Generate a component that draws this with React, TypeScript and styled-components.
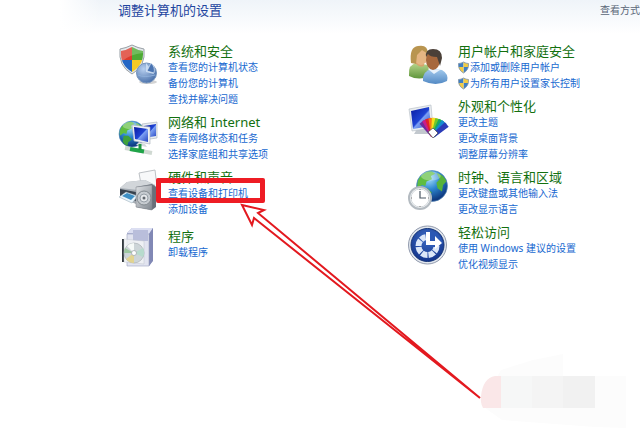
import React from 'react';
import styled, { createGlobalStyle } from 'styled-components';

const Global = createGlobalStyle`
  *, *::before, *::after { box-sizing: border-box; }
  body { margin: 0; background: #fff; font-family: "Noto Sans", "Noto Sans CJK SC", sans-serif; overflow: hidden; }
`;

const Page = styled.div`
  position: relative;
  min-height: 100vh;
  overflow: hidden;
  background: linear-gradient(90deg, #fff 60px, rgba(255, 255, 255, 0) 100px) no-repeat,
    linear-gradient(#eff4f9, #fff 34px);
`;

const Header = styled.header`
  display: flex;
  justify-content: space-between;
  align-items: center;
  height: 20px;
  padding-left: 118px;
`;

const Title = styled.h1`
  margin: 0;
  font-size: 13px;
  line-height: 20px;
  font-weight: 400;
  color: #1f45a0;
`;

const ViewBy = styled.span`
  font-size: 10px;
  line-height: 16px;
  color: #5a6678;
  white-space: nowrap;
`;

const Columns = styled.main`
  display: grid;
  grid-template-columns: 5fr 4fr;
  padding: 23px 0 0 118px;
`;

const Column = styled.div`
  display: flex;
  flex-direction: column;
  gap: 7px;
`;

const Group = styled.section<{ $spaced?: boolean }>`
  display: flex;
  gap: 10px;
  padding-top: ${(p) => (p.$spaced ? '4px' : '0')};
`;

const Icon = styled.svg`
  flex: none;
  width: 40px;
  height: 42px;
  overflow: visible;
`;

const Heading = styled.h2`
  margin: 0;
  font-size: 13px;
  line-height: 16px;
  font-weight: 400;
  color: #13700f;
  white-space: nowrap;
`;

const Links = styled.ul`
  margin: 0;
  padding: 0;
  list-style: none;
`;

const Item = styled.li`
  display: flex;
  align-items: center;
  gap: 1px;
  height: 16px;
`;

const Link = styled.a`
  font-size: 10px;
  line-height: 16px;
  color: #1768d0;
  text-decoration: none;
  white-space: nowrap;
  &:hover { text-decoration: underline; }
`;

const SmallShield = styled.svg`
  width: 11px;
  height: 13px;
`;

const Marker = styled.div`
  position: absolute;
  left: 156px;
  top: 178px;
  width: 109px;
  height: 25px;
  border: 5px solid #ee1c24;
  border-radius: 2px;
`;

const Overlay = styled.svg`
  position: absolute;
  left: 0;
  top: 0;
  width: 640px;
  height: 429px;
  pointer-events: none;
`;

const Defs = () => (
  <defs>
    <radialGradient id="globe" cx="40%" cy="25%" r="80%">
      <stop offset="0" stopColor="#a9e2fb" /><stop offset=".45" stopColor="#2c86d0" /><stop offset="1" stopColor="#08296f" />
    </radialGradient>
    <linearGradient id="screen" x2="1" y2="1">
      <stop offset="0" stopColor="#0a1aa0" /><stop offset=".5" stopColor="#2044d4" /><stop offset=".55" stopColor="#7ca0f4" /><stop offset="1" stopColor="#2746c0" />
    </linearGradient>
    <linearGradient id="metal" x2="1" y2="1">
      <stop offset="0" stopColor="#dfe2e5" /><stop offset="1" stopColor="#7f868e" />
    </linearGradient>
    <radialGradient id="pie" cx="35%" cy="30%" r="75%">
      <stop offset="0" stopColor="#b8d0f0" /><stop offset="1" stopColor="#486fa9" />
    </radialGradient>
    <linearGradient id="green" x2="0" y2="1">
      <stop offset="0" stopColor="#b9d68d" /><stop offset="1" stopColor="#5f963c" />
    </linearGradient>
    <linearGradient id="blue" x2="0" y2="1">
      <stop offset="0" stopColor="#a4cbed" /><stop offset="1" stopColor="#5289c4" />
    </linearGradient>
    <radialGradient id="ease" cx="50%" cy="30%" r="70%">
      <stop offset="0" stopColor="#3f6cc4" /><stop offset="1" stopColor="#12348c" />
    </radialGradient>
    <clipPath id="shieldClip"><path d="M14 4Q19 7 25 8Q26 22 14 29Q2 22 3 8Q9 7 14 4Z" /></clipPath>
    <clipPath id="miniClip"><path d="M5.500 1Q8 2.500 10.500 2.500Q11 9 5.500 12Q0 9 .500 2.500Q3 2.500 5.500 1Z" /></clipPath>
  </defs>
);

const Security = () => (
  <Icon viewBox="0 0 40 42" aria-hidden="true">
    <Defs />
    <path d="M14 2Q20 5 26 6Q28 23 14 31Q0 23 2 6Q8 5 14 2Z" fill="#e4e8eb" stroke="#99a0a6" />
    <g clipPath="url(#shieldClip)">
      <path d="M0 0H14V17H0Z" fill="#dd3b2c" /><path d="M14 0H28V17H14Z" fill="#4eaa35" />
      <path d="M0 17H14V32H0Z" fill="#2466c4" /><path d="M14 17H28V32H14Z" fill="#f5ca24" />
      <path d="M2 5Q14 2 26 5L25 10Q12 11 3 19Z" fill="#fff" opacity=".2" />
    </g>
    <ellipse cx="30" cy="39" rx="9" ry="2" fill="#aaa" opacity=".5" />
    <circle cx="28.500" cy="30" r="10" fill="url(#pie)" stroke="#7795bd" />
    <path d="M28 29V20L36 31Z" fill="#c9dcf3" /><path d="M29 28L33 20A10 10 0 0 1 36 30Z" fill="#4a74b2" stroke="#dbe8f7" strokeWidth=".7" />
    <path d="M20 32Q26 35 37 32" stroke="#8fb0da" fill="none" />
  </Icon>
);

const Globe = ({ x, y, r }: { x: number; y: number; r: number }) => (
  <g transform={`translate(${x} ${y}) scale(${r / 14})`}>
    <circle r="14" fill="url(#globe)" stroke="#5589b8" strokeWidth=".6" />
    <path d="M-11-8Q-6-14 0-13L3-11L-1-9L0-6L-5-4L-6 0L-9-1L-13 2Q-14-4-11-8Z" fill="#5fbd41" />
    <path d="M-9 2L-4 2L0 6L-4 9L-5 13Q-9 11-10 8Z" fill="#3ea03b" />
    <path d="M4-12Q11-10 13-4L10-1L9 5L5 2L4-3L7-6Z" fill="#56b33b" />
    <ellipse cx="-1" cy="-9" rx="9" ry="4" fill="#fff" opacity=".3" />
  </g>
);

const Network = () => (
  <Icon viewBox="0 0 40 42" aria-hidden="true">
    <Globe x={14} y={20} r={13} />
    <path d="M24 10L39 8V24L25 26Z" fill="#e8edf1" stroke="#a6afb9" strokeWidth=".6" /><path d="M26 12L38 10V22L26 24Z" fill="url(#screen)" />
    <path d="M14 11L32 13V30L16 27Z" fill="#eef1f4" stroke="#a6afb9" strokeWidth=".6" /><path d="M16 13L30 15V28L17 25Z" fill="url(#screen)" />
    <path d="M21 28L27 30L29 33L18 31Z" fill="#d5dadd" />
    <path d="M7 34L34 39" stroke="#d0d9d2" strokeWidth="4" /><path d="M12 35L26 37.500" stroke="#20a449" strokeWidth="4" /><path d="M22 30V36" stroke="#1b963e" strokeWidth="3" />
  </Icon>
);

const Hardware = () => (
  <Icon viewBox="0 0 40 42" aria-hidden="true">
    <path d="M23 15L21 4L37 1L39 18Z" fill="#f7f8f9" stroke="#bdc1c5" />
    <path d="M2 19L9 13L27 11L37 16V28L18 35L2 28Z" fill="#a6adb4" /><path d="M2 19L9 13L27 11L37 16L20 21Z" fill="#d2d6da" />
    <path d="M2 20L18 23V32L2 27Z" fill="#38424e" /><path d="M1 28L8 23L20 27L14 34Z" fill="#eaf5fc" stroke="#8ea2b0" strokeWidth=".5" /><path d="M4 27L9 24L17 27L13 31Z" fill="#3e8fc4" />
    <path d="M18 18L34 15L38 18V38L34 41L18 38Z" fill="#697079" /><path d="M18 18L34 16V41L18 38Z" fill="url(#metal)" stroke="#7c838a" strokeWidth=".5" />
    <circle cx="26" cy="29" r="7" fill="#c6cbd0" stroke="#82898f" /><circle cx="26" cy="29" r="4" fill="#e4e7ea" stroke="#979fa7" /><circle cx="26" cy="29" r="1.500" fill="#636970" />
  </Icon>
);

const Programs = () => (
  <Icon viewBox="0 0 40 42" aria-hidden="true">
    <path d="M9 5L14 0H35V32L31 38H10Z" fill="#a9afd0" /><path d="M9 5L14 0H35L31 6Z" fill="#dcdff2" />
    <path d="M31 6L35 0V33L31 38Z" fill="#8188b5" /><path d="M9 6H31V38H9Z" fill="#e2e4f0" stroke="#9ca2c0" strokeWidth=".6" />
    <path d="M15 2H30V13H15Z" fill="#b9bedb" /><path d="M4 11H6V34H4Z" fill="#333a3e" /><path d="M6 11L26 13V36L6 34Z" fill="#f1f3f5" opacity=".8" stroke="#bbc0c8" strokeWidth=".5" />
    <circle cx="16" cy="25" r="10" fill="#cdd5d8" stroke="#a2aaad" strokeWidth=".6" />
    <path d="M16 25L9 18A10 10 0 0 1 16 15Z" fill="#f6faf8" /><path d="M16 25L25 20A10 10 0 0 1 25 29Z" fill="#b7dbcd" /><path d="M16 25L16 35A10 10 0 0 1 8 31Z" fill="#e2d491" /><path d="M16 25L6 25L7 20Z" fill="#9dc7a0" />
    <circle cx="16" cy="25" r="2.500" fill="#fff" stroke="#969ea3" strokeWidth=".7" />
  </Icon>
);

const Users = () => (
  <Icon viewBox="0 0 40 42" aria-hidden="true">
    <path d="M1 32Q0 21 9 20L20 22L22 33Q11 38 1 33Z" fill="url(#green)" />
    <path d="M8 18H16V23Q12 25 8 21Z" fill="#d7a36e" />
    <ellipse cx="13" cy="13" rx="7" ry="9" fill="#e5b583" /><path d="M3 20Q1 4 10 3Q20 1 20 11L14 7L9 12L8 21Z" fill="#b99550" />
    <path d="M15 38Q14 28 24 26L34 27Q41 31 39 38Q28 44 15 38Z" fill="url(#blue)" /><path d="M20 26L26 31L32 27Z" fill="#e8f2fb" />
    <ellipse cx="25" cy="17" rx="7" ry="10" fill="#a7683d" /><path d="M18 14Q17 6 25 6Q34 6 34 15L32 23L29 14Q22 14 20 11Z" fill="#4b4038" />
  </Icon>
);

const colors = ['#6c2a9c', '#c81c8a', '#e0202a', '#f57a1b', '#f4e01b', '#6fc62b', '#18a963', '#168ad0', '#2b3cb8'];
const Appearance = () => (
  <Icon viewBox="0 0 40 42" aria-hidden="true">
    <path d="M9 31L16 30L21 36L6 36Z" fill="#c2c8ce" />
    <path d="M1 11L23 7L25 30L4 33Z" fill="#e9edf0" stroke="#b2bac2" strokeWidth=".6" /><path d="M3 13L21 9L23 28L5 31Z" fill="url(#screen)" />
    {colors.map((c, i) => <path key={c} d="M-2 0L-3-18L3-18L2 0Z" fill={c} transform={`translate(25 38) rotate(${-38 + i * 11})`} />)}
    <path d="M20 34L25 30L30 35L25 40Z" fill="#fff" stroke="#444" strokeWidth=".7" />
  </Icon>
);

const Clock = () => (
  <Icon viewBox="0 0 40 42" aria-hidden="true">
    <Globe x={24} y={17} r={15.5} />
    <circle cx="12" cy="29" r="11" fill="#f3f5f6" stroke="#b4bbc1" strokeWidth="2" /><circle cx="12" cy="29" r="9" fill="#fff" stroke="#d4d9dd" />
    <path d="M12 22V29H18" fill="none" stroke="#4d5964" strokeWidth="1.200" /><path d="M12 20V21M12 37V38M3 29H4M20 29H21" stroke="#777" />
  </Icon>
);

const Ease = () => (
  <Icon viewBox="0 0 40 42" aria-hidden="true">
    <circle cx="19.500" cy="21" r="19" fill="#e1e6ed" stroke="#929bae" /><circle cx="19.500" cy="21" r="16.500" fill="url(#ease)" stroke="#163577" />
    <circle cx="19.500" cy="22" r="9" fill="none" stroke="#dce7f8" strokeWidth="6" strokeDasharray="6 1" pathLength="56" />
    <path d="M17 8H28L33 14L35 19L28 23H19Z" fill="#2c58b4" /><path d="M18 8H22V17H27V12L34 19L27 25V21H18Z" fill="#fff" />
  </Icon>
);

const MiniShield = () => (
  <SmallShield viewBox="0 0 11 13" aria-hidden="true">
    <g clipPath="url(#miniClip)"><path d="M0 0H5.500V6H0ZM5.500 6H11V13H5.500Z" fill="#3f7fc4" /><path d="M5.500 0H11V6H5.500ZM0 6H5.500V13H0Z" fill="#f2cc44" /></g>
    <path d="M5.500 1Q8 2.500 10.500 2.500Q11 9 5.500 12Q0 9 .500 2.500Q3 2.500 5.500 1Z" fill="none" stroke="#7b91a6" strokeWidth=".8" />
  </SmallShield>
);

interface Category { title: string; icon: React.ComponentType; links: string[]; shields?: boolean; spaced?: boolean }

const left: Category[] = [
  { title: '系统和安全', icon: Security, links: ['查看您的计算机状态', '备份您的计算机', '查找并解决问题'] },
  { title: '网络和 Internet', icon: Network, links: ['查看网络状态和任务', '选择家庭组和共享选项'] },
  { title: '硬件和声音', icon: Hardware, links: ['查看设备和打印机', '添加设备'] },
  { title: '程序', icon: Programs, links: ['卸载程序'], spaced: true },
];

const right: Category[] = [
  { title: '用户帐户和家庭安全', icon: Users, links: ['添加或删除用户帐户', '为所有用户设置家长控制'], shields: true },
  { title: '外观和个性化', icon: Appearance, links: ['更改主题', '更改桌面背景', '调整屏幕分辨率'] },
  { title: '时钟、语言和区域', icon: Clock, links: ['更改键盘或其他输入法', '更改显示语言'] },
  { title: '轻松访问', icon: Ease, links: ['使用 Windows 建议的设置', '优化视频显示'] },
];

const CategoryList = ({ items }: { items: Category[] }) => (
  <Column>
    {items.map(({ title, icon: Picture, links, shields, spaced }) => (
      <Group key={title} $spaced={spaced}>
        <Picture />
        <div>
          <Heading>{title}</Heading>
          <Links>
            {links.map((text) => <Item key={text}>{shields && <MiniShield />}<Link href="#">{text}</Link></Item>)}
          </Links>
        </div>
      </Group>
    ))}
  </Column>
);

export default function App() {
  return (
    <Page>
      <Global />
      <Header><Title>调整计算机的设置</Title><ViewBy>查看方式</ViewBy></Header>
      <Columns><CategoryList items={left} /><CategoryList items={right} /></Columns>
      <Marker />
      <Overlay viewBox="0 0 640 429" aria-hidden="true">
        <path d="M501 370L533 360L563 354V376H626V428L595 427L502 420L481 405Z" fill="#fcfcfc" />
        <path d="M501 376H532V408H501Z" fill="#f6f7f7" /><path d="M532 376H563V408H532Z" fill="#f4f4f4" /><path d="M563 376H595V408H563Z" fill="#f1f1f1" />
        <path d="M501 376V408H483Q480 402 481 396Q483 378 495 376Z" fill="#fae7e8" />
        <path d="M480 398L258 213L264 210L242 205L252 225L254 218Z" fill="#fff" stroke="#e3191f" strokeWidth="2" strokeLinejoin="miter" />
      </Overlay>
    </Page>
  );
}
